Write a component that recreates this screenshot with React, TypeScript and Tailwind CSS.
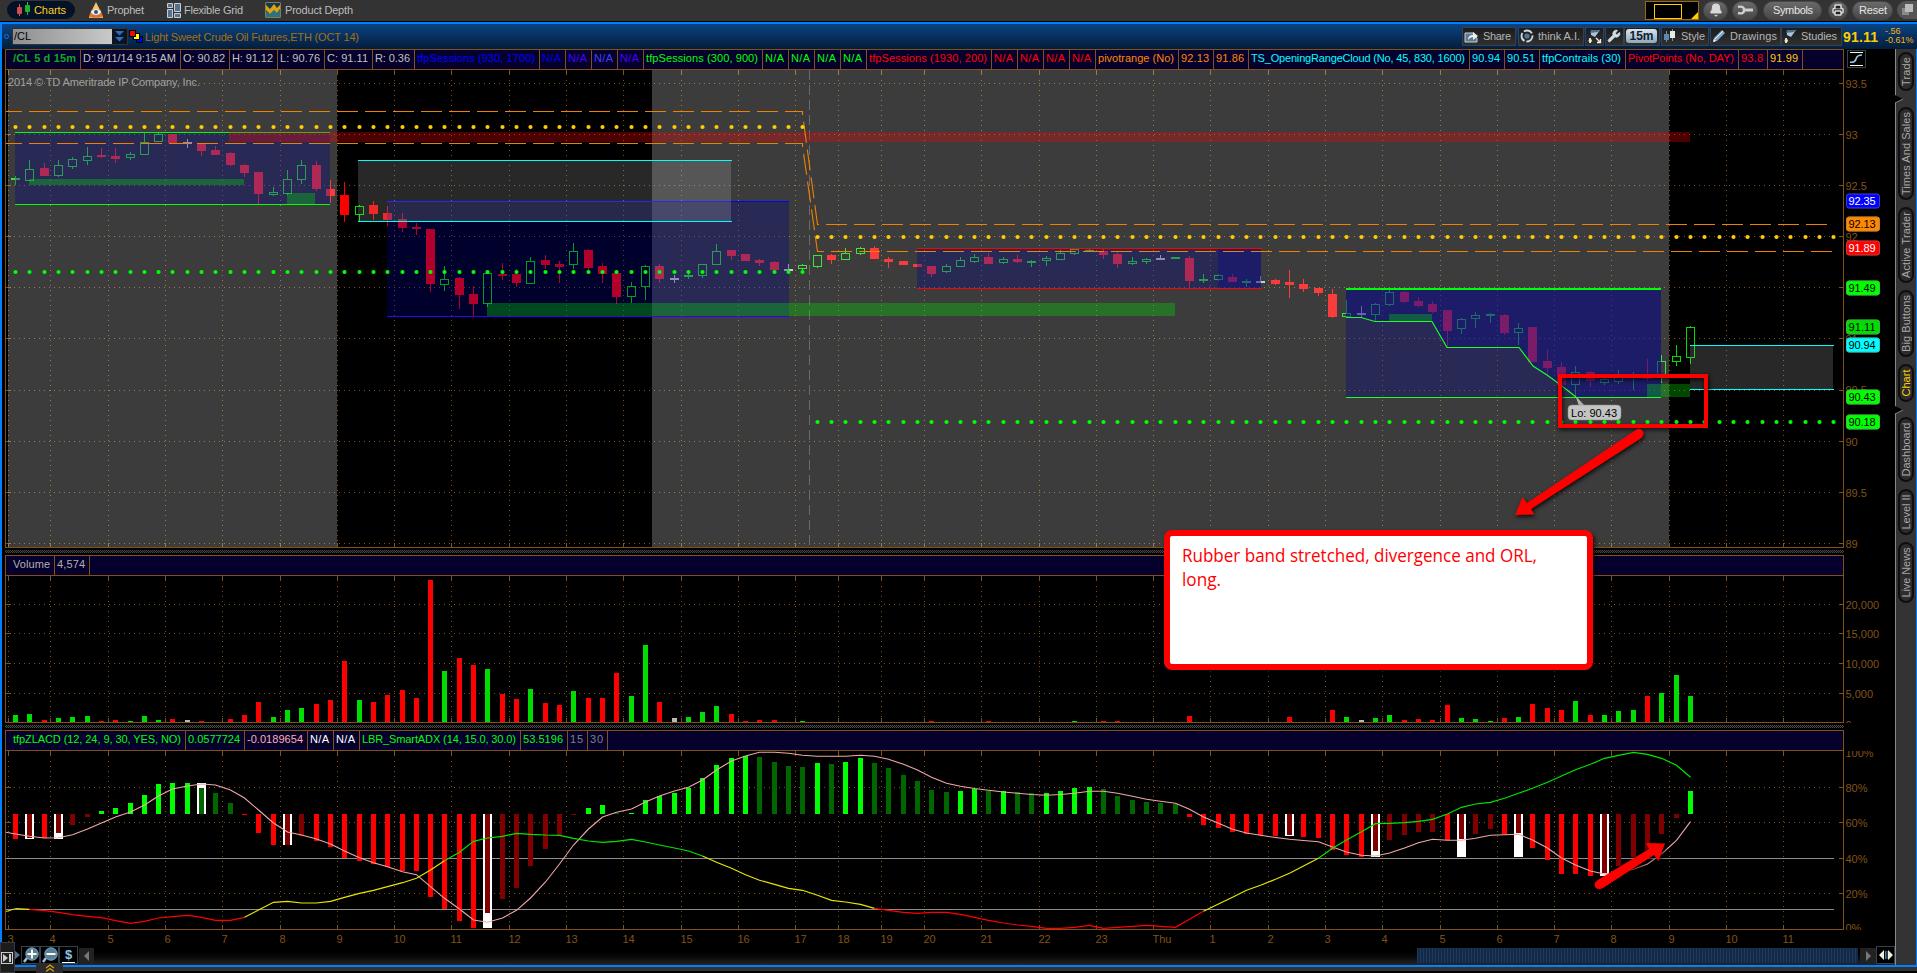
import React from 'react';
import { Bell, Printer, Wrench } from 'lucide-react';

const FIRST_X = 15;
const STEP = 14.316;
const barX = (i: number) => Math.round(FIRST_X + STEP * i);

const BROWN = '#80521a';

// x of each hour line, together with its label
const hours: [number, string][] = [
  [8, '3'], [50, '4'], [108, '5'], [165, '6'], [222, '7'], [280, '8'], [337, '9'], [394, '10'],
  [451, '11'], [509, '12'], [566, '13'], [623, '14'], [681, '15'], [738, '16'], [795, '17'],
  [838, '18'], [881, '19'], [924, '20'], [981, '21'], [1039, '22'], [1096, '23'], [1153, 'Thu'],
  [1210, '1'], [1268, '2'], [1325, '3'], [1382, '4'], [1440, '5'], [1497, '6'], [1554, '7'],
  [1611, '8'], [1669, '9'], [1726, '10'], [1783, '11'],
];

// kind (h hollow, r red, g green, d doji), high, body top, body bottom, low
const candles: [string, number, number, number, number][] = [
  ['g', 176, 178, 180, 185], ['h', 160, 169, 181, 181], ['r', 163, 168, 176, 176], ['h', 160, 165, 176, 177],
  ['h', 157, 159, 167, 169], ['h', 147, 156, 161, 165], ['r', 148, 155, 157, 158], ['r', 148, 156, 159, 163],
  ['h', 152, 154, 158, 160], ['h', 133, 142, 155, 155], ['h', 133, 134, 142, 142], ['r', 134, 134, 143, 143],
  ['d', 139, 142, 144, 148], ['r', 143, 143, 151, 156], ['r', 146, 150, 155, 155], ['r', 152, 153, 165, 166],
  ['r', 164, 165, 173, 177], ['r', 172, 172, 194, 204], ['h', 187, 192, 195, 196], ['h', 170, 179, 194, 195],
  ['h', 160, 165, 180, 184], ['r', 161, 165, 189, 191], ['r', 180, 189, 196, 203], ['r', 182, 195, 215, 222],
  ['h', 205, 206, 215, 222], ['r', 201, 205, 214, 220], ['r', 206, 213, 220, 226], ['r', 213, 219, 228, 232],
  ['r', 223, 227, 229, 235], ['r', 229, 229, 284, 292], ['h', 266, 279, 285, 291], ['r', 277, 278, 295, 309],
  ['r', 286, 294, 304, 316], ['h', 272, 273, 304, 307], ['r', 263, 274, 276, 280], ['r', 269, 274, 283, 287],
  ['h', 257, 261, 284, 284], ['r', 255, 260, 265, 269], ['r', 261, 264, 267, 283], ['h', 243, 251, 265, 269],
  ['r', 249, 250, 268, 270], ['r', 263, 266, 274, 283], ['r', 272, 273, 297, 304], ['h', 282, 286, 297, 303],
  ['h', 265, 266, 287, 300], ['r', 264, 266, 279, 283], ['d', 275, 278, 280, 283], ['g', 274, 275, 277, 279],
  ['h', 264, 264, 276, 278], ['h', 244, 251, 265, 265], ['r', 250, 250, 256, 260], ['r', 254, 254, 261, 261],
  ['r', 259, 260, 263, 266], ['r', 261, 262, 270, 270], ['d', 264, 269, 271, 272], ['h', 264, 265, 269, 270],
  ['h', 255, 255, 267, 268], ['r', 254, 255, 260, 264], ['h', 248, 253, 260, 260], ['h', 247, 248, 254, 255],
  ['r', 246, 248, 259, 259], ['r', 257, 259, 262, 268], ['r', 261, 261, 265, 265], ['r', 264, 264, 267, 267],
  ['r', 266, 266, 274, 277], ['h', 264, 266, 272, 273], ['h', 257, 260, 267, 267], ['h', 254, 257, 262, 263],
  ['r', 253, 257, 264, 264], ['h', 257, 259, 263, 264], ['r', 255, 259, 262, 263], ['g', 260, 261, 263, 267],
  ['h', 256, 258, 261, 266], ['h', 250, 253, 260, 260], ['h', 249, 249, 254, 255], ['g', 249, 250, 252, 252],
  ['r', 249, 251, 255, 259], ['r', 251, 254, 264, 268], ['h', 257, 261, 264, 265], ['h', 258, 259, 262, 264],
  ['d', 255, 258, 260, 260], ['g', 257, 257, 259, 259], ['r', 256, 258, 281, 288], ['g', 274, 279, 281, 283],
  ['h', 274, 275, 280, 281], ['r', 274, 277, 282, 282], ['g', 279, 281, 283, 287], ['d', 276, 281, 283, 283],
  ['r', 279, 280, 284, 285], ['r', 270, 282, 285, 298], ['r', 279, 284, 289, 292], ['r', 288, 288, 293, 296],
  ['r', 289, 294, 317, 318], ['h', 300, 313, 317, 317], ['d', 306, 313, 315, 317], ['h', 303, 304, 315, 321],
  ['h', 290, 292, 305, 306], ['r', 291, 292, 302, 303], ['r', 297, 301, 306, 307], ['r', 301, 304, 312, 313],
  ['r', 310, 310, 331, 347], ['h', 318, 319, 329, 334], ['h', 312, 315, 319, 328], ['g', 313, 314, 316, 323],
  ['r', 314, 315, 333, 335], ['h', 323, 328, 333, 345], ['r', 327, 327, 362, 362], ['r', 350, 361, 368, 374],
  ['r', 362, 367, 385, 385], ['h', 366, 372, 385, 396], ['r', 371, 372, 381, 387], ['h', 378, 379, 383, 385],
  ['h', 370, 377, 382, 384], ['g', 372, 376, 378, 390], ['r', 359, 376, 379, 381], ['h', 355, 361, 375, 383],
  ['h', 345, 356, 362, 366], ['h', 326, 327, 358, 364],
];

const volume =
  'g7 g8 r2 g4 g5 g6 r1 r2 g1 g6 g2 r3 w2 r1 r0 r3 r7 r20 g5 g12 g14 r18 r22 r61 g22 r20 r27 r32 r24 r142 g51 r64 r57 g53 r28 r23 g33 r19 r17 g31 r24 r24 r49 g26 g77 r20 w4 g5 g10 g16 r8 r1 r2 r2 r0 g1 r0 r0 r0 r0 r0 r0 r0 r0 r1 r0 r0 r0 r1 r0 r0 r0 r0 r0 g1 r0 r1 r1 r0 r0 r0 r0 r6 r0 r0 r0 r0 r0 r0 r5 r0 r0 r12 g5 w2 g4 g7 r2 r3 r2 r17 g4 g3 g1 r4 g5 r18 r14 r12 g21 r7 g7 g11 g12 r26 g29 g47 g26'.split(' ');

const volumeFill: Record<string, string> = { g: '#00dd00', r: '#ff0000', w: '#b8b8b8' };

// negative values hang below the zero line
const histogram = [
  -25, -24, -24, -19, -11, -3, 3, 6, 11, 19, 30, 31, 31, 26, 21, 11, -1, -19, -31, -31, -22, -27, -33, -44,
  -47, -50, -53, -57, -57, -83, -95, -107, -114, -99, -85, -74, -52, -35, -21, -1, 6, 9, 1, 1, 14, 18, 21,
  26, 36, 49, 56, 58, 57, 52, 48, 47, 51, 50, 52, 56, 51, 46, 39, 33, 24, 22, 23, 25, 23, 23, 22, 21, 21,
  23, 26, 27, 25, 18, 14, 12, 11, 10, -3, -11, -14, -18, -20, -21, -22, -21, -23, -24, -36, -41, -43, -37,
  -26, -21, -18, -18, -26, -25, -20, -15, -20, -19, -34, -46, -60, -60, -62, -59, -52, -43, -36, -20, -4, 23,
];

const fading = new Set([
  1, 3, 4, 5, 13, 14, 15, 19, 20, 33, 34, 35, 36, 37, 38, 39, 42, 52, 53, 54, 55, 57, 60, 61, 62, 63, 64, 65,
  68, 70, 71, 76, 77, 78, 79, 80, 81, 89, 95, 96, 97, 98, 99, 101, 102, 103, 105, 111, 112, 113, 114, 115, 116,
]);

const highlighted: Record<number, number> = {
  1: -25, 3: -25, 13: 31, 19: -31, 33: -114, 89: -22, 95: -43, 101: -43, 105: -43, 111: -62,
};

const signal = [
  834, 836.3, 838, 837.7, 834.7, 829, 823, 817, 812, 805, 796, 789, 786, 784, 785, 790, 798, 810, 823, 832,
  835, 839, 844, 851, 857.7, 862.7, 866.7, 871.7, 874.7, 886.7, 898.3, 909, 920, 922.3, 918, 910.3, 898, 882,
  864, 845, 829, 817, 812.3, 809, 802, 796, 791, 787.3, 780, 770, 761, 756, 752.3, 752.3, 753.3, 755.3, 756.3,
  756.3, 756.3, 755.3, 756.3, 759.3, 764.3, 770, 777.3, 783.3, 786.3, 788.5, 790.3, 792, 793.3, 794.5, 795.3,
  794.5, 793.3, 791.3, 791.3, 793.3, 796.3, 799.3, 801.3, 803.3, 809.3, 817, 823.3, 829.3, 833, 835.3, 837.5,
  839.3, 840.5, 841.7, 847, 852, 855.3, 856, 853, 848, 842.7, 839.3, 840.3, 840.3, 838.3, 835.3, 834.7, 834.3,
  840, 848, 858, 865, 871, 874, 873, 869.3, 864, 854, 840.3, 821.7,
];

const adx = [
  908.7, 909.3, 910.7, 912.3, 914.7, 916.3, 917.7, 920.7, 923.3, 921.3, 918, 916.7, 915.3, 917.3, 920.3, 920.3,
  917.3, 910, 902.3, 901.3, 903, 903, 901.3, 897.3, 893.3, 890.3, 886.7, 882.7, 878.3, 870, 860.7, 852.3, 841.3,
  838, 836.3, 833.3, 834.3, 835, 835.3, 838.3, 841, 842.3, 841.3, 839.3, 842, 845, 848, 851, 856, 862.3, 868.3,
  874.7, 880.3, 884.3, 888.3, 890.3, 895.3, 900.3, 902, 904.3, 908.3, 910.3, 912.3, 913.3, 912.3, 912.3, 914.3,
  917.3, 920.3, 923, 925, 926.3, 928.3, 928.3, 927.3, 925.3, 928.3, 927.3, 926.3, 925.3, 926.3, 927.3, 919.3,
  911.3, 904, 897.3, 890.3, 885.3, 879.3, 873.3, 866, 858.3, 848.3, 840, 831.7, 823.7, 823.3, 822.7, 821.3,
  819.3, 814, 807.3, 804, 802.3, 798.3, 793.3, 788.3, 782.3, 776, 769.7, 764.3, 758.3, 755.3, 752.3, 754.3,
  758.3, 765.3, 777.3,
];

const adxRuns: [number, number, string][] = [
  [0, 1, '#e6e600'], [1, 16, '#ff0000'], [16, 30, '#e6e600'], [30, 48, '#00e600'], [48, 60, '#e6e600'],
  [60, 83, '#ff0000'], [83, 91, '#e6e600'], [91, 117, '#00e600'],
];

const points = (values: number[], from = 0, to = values.length - 1) =>
  values
    .slice(from, to + 1)
    .map((v, i) => `${barX(from + i) + 0.5},${v}`)
    .join(' ');

type Cell = [string, number, string];

const priceCells: Cell[] = [
  ['D: 9/11/14 9:15 AM', 100, 'text-[#c0c0c0]'], ['O: 90.82', 49, 'text-[#c0c0c0]'],
  ['H: 91.12', 48, 'text-[#c0c0c0]'], ['L: 90.76', 47, 'text-[#c0c0c0]'], ['C: 91.11', 48, 'text-[#c0c0c0]'],
  ['R: 0.36', 42, 'text-[#c0c0c0]'], ['tfpSessions (930, 1700)', 125, 'text-[#0000ff]'],
  ['N/A', 26, 'text-[#0000e0]'], ['N/A', 26, 'text-[#4400ff]'], ['N/A', 26, 'text-[#4040ff]'],
  ['N/A', 26, 'text-[#4400ff]'], ['tfpSessions (300, 900)', 119, 'text-[#00ff00]'],
  ['N/A', 26, 'text-[#00ff00]'], ['N/A', 26, 'text-[#00ff00]'], ['N/A', 26, 'text-[#00ff00]'],
  ['N/A', 26, 'text-[#00ff00]'], ['tfpSessions (1930, 200)', 125, 'text-[#ff0000]'],
  ['N/A', 26, 'text-[#ff0000]'], ['N/A', 26, 'text-[#ff0000]'], ['N/A', 26, 'text-[#ff0000]'],
  ['N/A', 26, 'text-[#ff0000]'], ['pivotrange (No)', 83, 'text-[#ff8800]'], ['92.13', 35, 'text-[#ff8800]'],
  ['91.86', 35, 'text-[#ff8800]'], ['TS_OpeningRangeCloud (No, 45, 830, 1600)', 221, 'text-[#00ffff]'],
  ['90.94', 35, 'text-[#00ffff]'], ['90.51', 35, 'text-[#00ffff]'], ['tfpContrails (30)', 86, 'text-[#00ffff]'],
  ['PivotPoints (No, DAY)', 113, 'text-[#ff0000]'], ['93.8', 29, 'text-[#ff0000]'], ['91.99', 35, 'text-[#ffcc00]'],
];

const volumeCells: Cell[] = [['4,574', 35, 'text-[#b0b0b0]']];

const studyCells: Cell[] = [
  ['0.0577724', 59, 'text-[#00ff00]'], ['-0.0189654', 63, 'text-[#ffafaf]'], ['N/A', 26, 'text-white'],
  ['N/A', 26, 'text-white'], ['LBR_SmartADX (14, 15.0, 30.0)', 161, 'text-[#00ff00]'],
  ['53.5196', 47, 'text-[#00ff00]'], ['15', 20, 'text-[#808080]'], ['30', 20, 'text-[#808080]'],
];

function Fit({ text, width, className = '' }: { text: string; width: number; className?: string }) {
  return (
    <svg width={width} height="14" className={`shrink-0 overflow-visible fill-current ${className}`}>
      <text x="0" y="11" textLength={width} lengthAdjust="spacing">
        {text}
      </text>
    </svg>
  );
}

function CellRow({ first, firstWidth, firstClass, cells }: {
  first: string;
  firstWidth: number;
  firstClass: string;
  cells: Cell[];
}) {
  return (
    <div className="flex h-[21px] w-[1839px] shrink-0 border border-[#80521a] bg-[#05002c] text-[11px]">
      <div
        className={`flex shrink-0 items-center border-r border-[#80521a] pb-[3px] pl-[7px] ${firstClass}`}
        style={{ width: firstWidth }}
      >
        <Fit text={first} width={firstWidth - 12} />
      </div>
      {cells.map(([text, width, color], i) => (
        <div
          key={i}
          className={`flex shrink-0 items-center border-r border-[#80521a] pb-[3px] pl-[2px] ${color}`}
          style={{ width }}
        >
          <Fit text={text} width={width - 7} />
        </div>
      ))}
    </div>
  );
}

function Grid({ top, bottom, rows }: { top: number; bottom: number; rows: number[] }) {
  return (
    <g stroke={BROWN} shapeRendering="crispEdges">
      {hours.map(([x]) => (
        <g key={x}>
          <path d={`M${x + 0.5} ${top + 10}V${bottom - 5}`} strokeDasharray="1 4" />
          <path d={`M${x + 0.5} ${top}v5M${x + 0.5} ${bottom - 4}v4`} />
        </g>
      ))}
      {rows.map((y) => (
        <g key={y}>
          <path d={`M14 ${y + 0.5}H1830`} strokeDasharray="1 4" />
          <path d={`M6 ${y + 0.5}h5M1839 ${y + 0.5}h4`} />
        </g>
      ))}
      <path d={`M5.5 ${top}V${bottom + 0.5}H1843.5V${top}`} fill="none" />
    </g>
  );
}

function AxisLabels({ labels }: { labels: [number, string][] }) {
  return (
    <g fill={BROWN} fontSize="11">
      {labels.map(([y, label]) => (
        <text key={label} x="1845.5" y={y + 4}>
          {label}
        </text>
      ))}
    </g>
  );
}

function Candle({ i }: { i: number }) {
  const [kind, high, top, bottom, low] = candles[i];
  const x = barX(i);
  const color = kind === 'r' ? '#ff0000' : kind === 'd' ? '#c0c0c0' : '#00dd00';
  if (kind === 'h') {
    return (
      <g stroke={color} fill="none">
        <path d={`M${x + 0.5} ${high}V${top}M${x + 0.5} ${bottom}V${low}`} />
        <rect x={x - 3.5} y={top + 0.5} width="8" height={Math.max(2, bottom - top - 1)} />
      </g>
    );
  }
  return (
    <g fill={color}>
      <rect x={x} y={high} width="1" height={low - high} />
      <rect x={x - 4} y={top} width="9" height={bottom - top} />
    </g>
  );
}

function Dots({ from, to, y, color }: { from: number; to: number; y: number; color: string }) {
  return (
    <g fill={color}>
      {Array.from({ length: to - from + 1 }, (_, k) => (
        <circle key={k} cx={barX(from + k) + 0.5} cy={y} r="2.1" />
      ))}
    </g>
  );
}

const BLUE = 'rgba(0,0,150,0.3)';
const GREEN = 'rgba(0,240,0,0.3)';

const tags: [number, string, string, string][] = [
  [201, '92.35', '#0000ff', '#ffffff'],
  [224, '92.13', '#ff8800', '#000000'],
  [248, '91.89', '#ff0000', '#ffffff'],
  [288, '91.49', '#00ff00', '#000000'],
  [327, '91.11', '#00dd00', '#000000'],
  [345, '90.94', '#00ffff', '#000000'],
  [397, '90.43', '#00ff00', '#000000'],
  [422, '90.18', '#00ff00', '#000000'],
];

function PriceChart() {
  return (
    <svg className="block shrink-0" width="1890" height="478" viewBox="5 70 1890 478">
      <Grid top={70} bottom={547} rows={[83, 134, 185, 236, 287, 338, 390, 441, 492, 543]} />
      <g shapeRendering="crispEdges">
        {candles.map((_, i) => (
          <Candle key={i} i={i} />
        ))}
        <rect x="8" y="70" width="329" height="477" fill="rgba(240,240,240,0.25)" />
        <rect x="652" y="70" width="1017" height="477" fill="rgba(240,240,240,0.25)" />
        <path d="M809.5 70V547" stroke="#6a6a6a" strokeDasharray="10 5" />

        <rect x="15" y="132" width="315" height="73" fill={BLUE} />
        <path d="M15 132.5H330M15 204.5H330" stroke="#00ff00" />
        <rect x="29" y="179" width="215" height="6" fill={GREEN} />
        <rect x="287" y="193" width="28" height="11" fill={GREEN} />

        <rect x="387" y="201" width="402" height="116" fill={BLUE} />
        <path d="M387 201.5H789" stroke="#0000ff" />
        <path d="M387 316.5H789" stroke="#3300ff" />
        <rect x="487" y="303" width="688" height="13" fill={GREEN} />
        <rect x="358" y="160" width="373" height="61" fill="rgba(180,180,180,0.22)" />
        <path d="M358 160.5H732M358 221.5H732" stroke="#00ffff" />

        <rect x="917" y="248" width="344" height="40" fill={BLUE} />
        <rect x="1218" y="248" width="43" height="40" fill={BLUE} />
        <path d="M917 248.5H1262M917 288.5H1262" stroke="#ff0000" />

        <rect x="1346" y="289" width="315" height="108" fill={BLUE} />
        <polygon
          points="1346,289 1661,289 1661,397 1576,397 1560,384 1547,375 1533,367 1519,348 1447,348 1432,321 1375,321 1361,318 1346,318"
          fill={BLUE}
        />
        <rect x="1389" y="314" width="43" height="7" fill={GREEN} />
        <rect x="1647" y="384" width="43" height="13" fill={GREEN} />
        <path d="M1346 289H1661" stroke="#00ff00" strokeWidth="2" />
        <path d="M1346 397.5H1661" stroke="#1fff1f" />

        <rect x="229" y="132" width="1461" height="10" fill="rgba(255,0,0,0.3)" />
        <rect x="1690" y="345" width="143" height="45" fill="rgba(180,180,180,0.22)" />
        <path d="M1690 345.5H1834M1690 389.5H1834" stroke="#00ffff" />
      </g>
      <polyline
        points="1346,317.5 1361,317.5 1375,321.5 1432,321.5 1447,347.5 1519,347.5 1533,366 1547,375 1560,384.5 1576,397"
        fill="none"
        stroke="#1fff1f"
        strokeWidth="1.2"
      />
      <g fill="none" stroke="#f08000" strokeWidth="1.1">
        <path d="M6 111.5H802.5V114L817.5 224.5H1833" strokeDasharray="21 7" strokeDashoffset="5" />
        <path d="M6 143.5H802.5V146L817.5 251.5H1833" strokeDasharray="21 7" strokeDashoffset="5" />
      </g>
      <Dots from={0} to={55} y={127} color="#ffcc00" />
      <Dots from={56} to={127} y={237} color="#ffcc00" />
      <Dots from={0} to={55} y={272} color="#00ff00" />
      <Dots from={56} to={127} y={422} color="#00ff00" />
      <text x="8" y="86" fill="#a0a0a0" fontSize="11" textLength="192">
        2014 © TD Ameritrade IP Company, Inc.
      </text>
      <AxisLabels
        labels={[
          [84, '93.5'], [135, '93'], [186, '92.5'], [237, '92'], [339, '91'], [390, '90.5'], [442, '90'],
          [493, '89.5'], [544, '89'],
        ]}
      />
      {tags.map(([y, label, fill, color]) => (
        <g key={label}>
          <rect x="1846.5" y={y - 7} width="33" height="14" rx="2.5" fill={fill} stroke={fill} />
          <rect x="1846.5" y={y - 7} width="33" height="14" rx="2.5" fill="none" stroke="rgba(128,128,128,0.5)" />
          <text x="1848.5" y={y + 4} fontSize="11" fill={color} textLength="27">
            {label}
          </text>
        </g>
      ))}
      <path d="M1575.5 396L1579 406H1585Z" fill="#b4b4b4" />
      <rect x="1568" y="405" width="53" height="15" rx="4" fill="#c4c4c4" stroke="#8a8a8a" strokeWidth="0.5" />
      <text x="1571" y="417" fontSize="11" textLength="46">
        Lo: 90.43
      </text>
    </svg>
  );
}

function VolumeChart() {
  return (
    <svg className="block shrink-0" width="1890" height="147" viewBox="5 576 1890 147">
      <Grid top={576} bottom={722} rows={[604, 633, 663, 693]} />
      <g shapeRendering="crispEdges">
        {volume.map((v, i) => {
          const h = Number(v.slice(1));
          return <rect key={i} x={barX(i) - 2} y={722 - h} width="5" height={h} fill={volumeFill[v[0]]} />;
        })}
      </g>
      <AxisLabels labels={[[605, '20,000'], [634, '15,000'], [664, '10,000'], [694, '5,000'], [725, '0']]} />
    </svg>
  );
}

function StudyChart() {
  return (
    <svg className="block shrink-0" width="1890" height="179" viewBox="5 751 1890 179">
      <Grid top={751} bottom={929} rows={[787, 822, 858, 893]} />
      <path d="M6 858.5H1834M6 909.5H1834" stroke="#8c8c8c" />
      <g shapeRendering="crispEdges">
        {histogram.map((v, i) => {
          const white = highlighted[i];
          const bright = v > 0 ? '#00ff00' : '#ff0000';
          const dark = v > 0 ? '#006600' : '#800000';
          return (
            <g key={i}>
              {white !== undefined && (
                <rect x={barX(i) - 4} y={white > 0 ? 814 - white : 814} width="9" height={Math.abs(white)} fill="#fff" />
              )}
              <rect
                x={barX(i) - 2}
                y={v > 0 ? 814 - v : 814}
                width="5"
                height={Math.abs(v)}
                fill={fading.has(i) ? dark : bright}
              />
            </g>
          );
        })}
      </g>
      <polyline points={`6,832.3 ${points(signal)}`} fill="none" stroke="#f0a8a8" strokeWidth="1.1" />
      <path d="M6 911.5L15.5 908.7" stroke="#e6e600" />
      {adxRuns.map(([from, to, color]) => (
        <polyline key={from} points={points(adx, from, to)} fill="none" stroke={color} strokeWidth="1.2" />
      ))}
      <AxisLabels
        labels={[[753, '100%'], [788, '80%'], [823, '60%'], [859, '40%'], [894, '20%'], [928, '0%']]}
      />
    </svg>
  );
}

function Splitter() {
  return (
    <div className="flex h-[7px] w-[1839px] shrink-0 items-center">
      <div className="h-[3px] w-full bg-[repeating-conic-gradient(#4a4a4a_0_25%,#0a0a0a_0_50%)] bg-[length:2px_2px]" />
    </div>
  );
}

function TopBar() {
  return (
    <div className="flex h-[22px] shrink-0 items-center border-b border-black bg-[#333] pb-px text-[11px] text-[#bdbdbd]">
      <div className="ml-[7px] flex h-[18px] w-[68px] items-center rounded-full bg-[#031226] pl-[9px] text-[#ffcc22]">
        <svg width="16" height="16" viewBox="0 0 16 16" className="mr-[2px]">
          <path d="M3.500 2v12" stroke="#c55" />
          <path d="M11.500 0v13" stroke="#2b4" />
          <rect x="1" y="5" width="5" height="7" rx="1" fill="#d34b4b" />
          <rect x="9" y="3" width="5" height="7" rx="1" fill="#1fb32d" />
        </svg>
        <Fit text="Charts" width={32} />
      </div>
      <svg width="16" height="17" viewBox="0 0 16 17" className="ml-[13px]">
        <path d="M8 0L12 8H4Z" fill="#f3c56a" />
        <path d="M4 7h8l3 7q-7 4-14 0Z" fill="#d8742a" />
        <ellipse cx="8" cy="10" rx="5" ry="3" fill="#e8eef5" />
        <circle cx="8" cy="10" r="2" fill="#28508a" />
        <path d="M1 14q7 3 14 0v2H1Z" fill="#f0a95a" />
      </svg>
      <div className="ml-[3px] w-[60px]">
        <Fit text="Prophet" width={37} />
      </div>
      <svg width="14" height="15" viewBox="0 0 14 15" fill="#55718c" stroke="#c5ced8">
        <path d="M.5.5h5v4h-5zM.5 6.500h5v8h-5zM7.500.5h6v8h-6zM7.500 10.500h6v4h-6z" />
      </svg>
      <div className="ml-[3px] w-[81px]">
        <Fit text="Flexible Grid" width={59} />
      </div>
      <svg width="16" height="16" viewBox="0 0 16 16">
        <rect width="16" height="16" rx="1.500" fill="#8a7c50" />
        <rect x="1" y="1" width="14" height="14" fill="#143a4c" />
        <path d="M1 15V9l4 3 4-4 3 3 3-3v7Z" fill="#2b7184" />
        <path d="M1 3l4 4 4-5 3 4 3-3v4l-3 4-3-3-4 4-4-4Z" fill="#d9a514" />
      </svg>
      <div className="ml-[4px] w-[70px]">
        <Fit text="Product Depth" width={68} />
      </div>
      <div className="flex-1" />
      <div className="flex items-center text-[#e6e6e6]">
        <svg width="54" height="19" viewBox="0 0 54 19">
          <rect x=".5" y=".5" width="53" height="18" stroke="#9a6a10" fill="#000" />
          <rect x="9.500" y="3.500" width="27" height="14" stroke="#ffcc00" fill="none" />
          <path d="M53 11v7h-7Z" fill="#ffcc00" />
        </svg>
        <RoundButton width={25} margin={4}>
          <Bell size={14} fill="#d8d8d8" color="#d8d8d8" strokeWidth={2} />
        </RoundButton>
        <RoundButton width={26} margin={4}>
          <svg width="17" height="10" viewBox="0 0 17 10" fill="none" stroke="#cfcfcf" strokeWidth="2.500">
            <path d="M1 2q6-1.500 6 3t-6 3" />
            <path d="M7 5h9" strokeWidth="3" />
          </svg>
        </RoundButton>
        <RoundButton width={59} margin={5}>
          <Fit text="Symbols" width={40} />
        </RoundButton>
        <RoundButton width={20} margin={6}>
          <Printer size={12} color="#dcdcdc" fill="#222" strokeWidth={3} />
        </RoundButton>
        <RoundButton width={41} margin={4}>
          <Fit text="Reset" width={28} />
        </RoundButton>
        <div className="ml-1 flex h-[18px] w-[20px] items-center rounded-l-full bg-[#555] pl-[5px]">
          <svg width="11" height="12" viewBox="0 0 11 12">
            <path d="M0 4h7v7H0z" fill="#8a8a8a" />
            <path d="M3 0h8v8H3z" fill="#bbb" />
          </svg>
        </div>
      </div>
    </div>
  );
}

function RoundButton({ width, margin, children }: { width: number; margin: number; children: React.ReactNode }) {
  return (
    <div
      className="flex h-[19px] shrink-0 items-center justify-center rounded-full border border-[#484848] bg-gradient-to-b from-[#6a6a6a] to-[#474747]"
      style={{ width, marginLeft: margin }}
    >
      {children}
    </div>
  );
}

function ToolButton({ width, margin = 1, children }: { width: number; margin?: number; children: React.ReactNode }) {
  return (
    <div
      className="flex h-[19px] shrink-0 items-center gap-[4px] border border-[#34414e] bg-gradient-to-b from-[#1c1c1c] to-[#303030] pl-px"
      style={{ width, marginLeft: margin }}
    >
      {children}
    </div>
  );
}

function Flashlight() {
  return (
    <svg width="14" height="15" viewBox="0 0 14 15">
      <path d="M4 1h9L8 8 4 6Z" fill="#a9c6de" />
      <path d="M4 1h9l-2 2-8 1Z" fill="#4d7090" />
      <path d="M3 9q3 3 0 5-2-2 0-5" fill="#e4f2d8" stroke="#e4f2d8" />
    </svg>
  );
}

function Toolbar() {
  return (
    <div className="flex h-[25px] shrink-0 items-center bg-gradient-to-b from-[#0a4484] to-[#041d3c] pb-px text-[11px] text-[#b4b4b4]">
      <div className="ml-[2px] h-[5px] w-[5px] rounded-full border border-[#1e6fd0]" />
      <div className="ml-[3px] flex h-[17px] w-[116px] items-center border border-[#333] bg-gradient-to-r from-[#8f8f8f] to-[#d2d2d2] text-black">
        <div className="flex-1 pl-px">
          <Fit text="/CL" width={17} />
        </div>
        <svg width="15" height="15" viewBox="0 0 15 15">
          <rect width="15" height="15" fill="#0b1420" />
          <path d="M3 2h9L7.500 6.500ZM3 8h9l-4.500 4.500Z" fill="#2a6cc0" />
        </svg>
      </div>
      <svg width="14" height="13" viewBox="0 0 14 13" stroke="#000" className="ml-[1px]">
        <rect x="7.500" y="6.500" width="6" height="6" fill="#0000ff" />
        <rect x="4.500" y="3.500" width="6" height="6" fill="#ffff00" />
        <rect x=".5" y=".5" width="6" height="6" fill="#ff0000" />
      </svg>
      <div className="ml-[2px] pt-px text-[#a87010]">
        <Fit text="Light Sweet Crude Oil Futures,ETH (OCT 14)" width={214} />
      </div>
      <div className="flex-1" />
      <ToolButton width={54}>
        <svg width="15" height="13" viewBox="0 0 15 13">
          <path d="M1 3h9v2l3 3v4H1Z" fill="#5d7890" stroke="#c0d4e4" />
          <path d="M4 10q0-5 5-5V2l5 4-5 4V7q-3 0-5 3" fill="#f0f0e4" />
        </svg>
        <Fit text="Share" width={28} />
      </ToolButton>
      <ToolButton width={66} margin={2}>
        <svg width="14" height="14" viewBox="0 0 14 14" fill="none">
          <circle cx="7" cy="7" r="5.500" stroke="#c9dcea" strokeWidth="1.800" strokeDasharray="9 2" />
          <circle cx="7" cy="7" r="2.600" fill="#4f7897" />
        </svg>
        <Fit text="think A.I." width={42} />
      </ToolButton>
      <ToolButton width={19}>
        <svg width="16" height="15" viewBox="0 0 16 15">
          <path d="M4 1h9L8 8 4 6Z" fill="#a9c6de" />
          <path d="M4 1h9l-2 2-8 1Z" fill="#4d7090" />
          <path d="M3 9q3 3 0 5-2-2 0-5" fill="#e4f2d8" stroke="#e4f2d8" />
          <path d="M9 9l4 4M13.500 10v3.500H10" stroke="#f0f0e4" strokeWidth="1.300" fill="none" />
        </svg>
      </ToolButton>
      <ToolButton width={19}>
        <Wrench size={14} color="#cfe0e8" fill="#cfe0e8" strokeWidth={1.5} />
      </ToolButton>
      <ToolButton width={36} margin={0}>
        <div className="flex h-[14px] w-[31px] items-center justify-center rounded-[3px] bg-gradient-to-b from-[#d8e6f0] to-[#8da7bd] text-[12px] font-bold text-[#10202c]">
          15m
        </div>
      </ToolButton>
      <ToolButton width={48}>
        <svg width="14" height="14" viewBox="0 0 14 14">
          <path d="M3.500 2v11M9.500 0v12" stroke="#6a94b4" />
          <rect x="1" y="5" width="5" height="6" fill="#5f88ac" />
          <rect x="7" y="2" width="5" height="7" fill="#e2efe0" />
        </svg>
        <Fit text="Style" width={24} />
      </ToolButton>
      <ToolButton width={71}>
        <svg width="14" height="14" viewBox="0 0 14 14">
          <path d="M1 13l1-4 8-8 3 3-8 8Z" fill="#7fabd0" />
          <path d="M3 10l8-8" stroke="#e4f0f8" />
          <path d="M1 13l1-3 2 2Z" fill="#fff" />
        </svg>
        <Fit text="Drawings" width={47} />
      </ToolButton>
      <ToolButton width={61} margin={0}>
        <Flashlight />
        <Fit text="Studies" width={36} />
      </ToolButton>
      <div className="ml-px w-[42px] text-[14px] font-bold text-[#ffcc00]">
        <svg width="35" height="16" className="overflow-visible fill-current">
          <text x="0" y="14" textLength="35">
            91.11
          </text>
        </svg>
      </div>
      <div className="w-[32px] text-[9px] leading-[9px] text-[#ffb000]">
        <div>-.56</div>
        <div>-0.61%</div>
      </div>
    </div>
  );
}

const sideTabs: [string, number, number, number][] = [
  ['Trade', 39, 3, 29], ['Times And Sales', 93, 16, 83], ['Active Trader', 76, 7, 66], ['Big Buttons', 67, 7, 57],
  ['Chart', 38, 7, 27], ['Dashboard', 65, 15, 54], ['Level II', 46, 7, 35], ['Live News', 61, 7, 50],
];

function SideTabs() {
  return (
    <div className="relative flex w-[21px] shrink-0 flex-col items-center border-l border-[#8a8a8a] bg-[#333] text-[11px]">
      {sideTabs.map(([label, height, gap, length]) => (
        <div
          key={label}
          className={`w-[16px] shrink-0 rounded-full border-2 border-[#0e0e0e] bg-[#2c2c2c] ${
            label === 'Chart' ? 'text-[#ffcc00]' : 'text-[#a8a8a8]'
          }`}
          style={{ height, marginTop: gap }}
        >
          <svg width="12" height={height - 4} className="block fill-current">
            <text transform={`translate(10 ${(height - 4 + length) / 2}) rotate(-90)`} textLength={length}>
              {label}
            </text>
          </svg>
        </div>
      ))}
      {/* notches that close the groups of tabs */}
      <svg width="9" height="8" className="absolute top-[46px] -left-[1px]">
        <path d="M0 0L8 4L0 8Z" />
        <path d="M8 4L0 8" stroke="#888" />
      </svg>
      <svg width="9" height="8" className="absolute top-[357px] -left-[1px]">
        <path d="M0 0L8 4L0 8Z" />
        <path d="M8 4L0 8" stroke="#888" />
      </svg>
    </div>
  );
}

function Magnifier({ plus = false }: { plus?: boolean }) {
  return (
    <div className="flex h-[18px] w-[19px] items-center justify-center border border-[#34414e] bg-black">
      <svg width="16" height="16" viewBox="0 0 16 16">
        <path d="M1 15l3-4" stroke="#9cc0d8" strokeWidth="2.500" />
        <circle cx="9" cy="7" r="6.200" fill="#567d9e" stroke="#88a9c2" />
        <path d={plus ? 'M4.500 7h9M9 2.500v9' : 'M4.500 7h9'} stroke="#fffde0" strokeWidth="2" />
      </svg>
    </div>
  );
}

function ScrollBar() {
  return (
    <div className="flex h-[17px] w-[1890px] shrink-0 items-start bg-gradient-to-b from-black to-[#262626]">
      <div className="-mt-[2px] ml-[9px] flex h-[18px] w-[7px] items-center bg-black">
        <svg width="7" height="10" viewBox="0 0 7 10">
          <path d="M0 0l6 5-6 5Z" fill="#50728e" />
        </svg>
      </div>
      <div className="-mt-[2px] flex">
        <Magnifier plus />
        <Magnifier />
        <div className="flex h-[18px] w-[19px] items-center justify-center border border-[#34414e] bg-black">
          <div className="border-b border-white px-[3px] text-[13px] leading-[14px] font-bold text-[#8fc4e8]">$</div>
        </div>
      </div>
      <div className="ml-px flex h-[16px] w-[15px] items-center justify-center bg-[#222]">
        <svg width="5" height="10">
          <path d="M5 0v10L0 5Z" fill="#777" />
        </svg>
      </div>
      <div className="flex-1" />
      <div className="h-[15px] w-[441px] bg-[repeating-linear-gradient(90deg,#1d3a5c_0_1px,#122a47_1px_3px)]" />
      <div className="ml-[2px] flex h-[15px] w-[16px] items-center justify-center bg-[#222]">
        <svg width="5" height="10">
          <path d="M0 0v10l5-5Z" fill="#777" />
        </svg>
      </div>
      <div className="-mt-[2px] flex h-[18px] w-[19px] items-center justify-center border border-[#34414e] bg-black">
        <svg width="14" height="12" viewBox="0 0 14 12">
          <path d="M5 1v10L0 6ZM9 1v10l5-5Z" fill="#eef4dc" />
          <path d="M6.500 2v8M8 2v8" stroke="#4d7aa0" />
        </svg>
      </div>
    </div>
  );
}

function HourLabels() {
  return (
    <svg className="block shrink-0" width="1890" height="18" viewBox="5 930 1890 18">
      <g fill={BROWN} fontSize="11">
        {hours.map(([x, label]) => (
          <text key={x} x={x - 0.5} y="943">
            {label}
          </text>
        ))}
      </g>
    </svg>
  );
}

// Hand-drawn trade notes, on top of the whole chart
function Annotations() {
  return (
    <>
      <svg className="absolute inset-0 drop-shadow-[1px_2px_2px_rgba(0,0,0,0.8)]" width="1917" height="973">
        <rect x="1560" y="376" width="146" height="50" fill="none" stroke="#ff0000" strokeWidth="4" />
        <path
          fill="#ff0000"
          d="M1515 515L1522.500 497L1527 503L1635 430.500Q1641 427 1643.500 432Q1644 436 1640 439L1531 509L1534.500 514.500Z"
        />
        <path
          fill="#ff0000"
          d="M1665 843.500L1646 843L1649 849L1597 880.500Q1593 884 1596 888Q1599 890 1603 888L1654 855L1658.500 861Z"
        />
      </svg>
      <div className="absolute top-[530px] left-[1164px] h-[140px] w-[429px] rounded-[8px] border-[6px] border-[#ff0000] bg-white pt-[6px] pl-[12px] font-['Open_Sans','Noto_Sans',sans-serif] shadow-[2px_3px_4px_rgba(0,0,0,0.7)]">
        <svg width="380" height="60" fill="#ff0000" fontSize="18">
          <text x="0" y="20" textLength="355" lengthAdjust="spacingAndGlyphs">
            Rubber band stretched, divergence and ORL,
          </text>
          <text x="0" y="44" textLength="39" lengthAdjust="spacingAndGlyphs">
            long.
          </text>
        </svg>
      </div>
    </>
  );
}

export default function App() {
  return (
    <div className="relative flex h-[973px] w-[1917px] flex-col overflow-hidden bg-black font-['Liberation_Sans',Arial,sans-serif]">
      <TopBar />
      <div className="flex h-[945px] shrink-0 flex-col border-t-2 border-b-2 border-l-2 border-[#0080ff]">
        <Toolbar />
        <div className="flex h-[916px]">
          <div className="ml-[3px] flex w-[1890px] shrink-0 flex-col">
            <CellRow
              first="/CL 5 d 15m"
              firstWidth={75}
              firstClass="font-bold text-[#10a828]"
              cells={priceCells}
            />
            <PriceChart />
            <Splitter />
            <CellRow first="Volume" firstWidth={49} firstClass="text-[#b0b0b0]" cells={volumeCells} />
            <VolumeChart />
            <Splitter />
            <CellRow
              first="tfpZLACD (12, 24, 9, 30, YES, NO)"
              firstWidth={180}
              firstClass="text-[#00ff00]"
              cells={studyCells}
            />
            <StudyChart />
            <HourLabels />
            <ScrollBar />
          </div>
          <SideTabs />
          <div className="w-px bg-[#0080ff]" />
        </div>
      </div>
      <div className="h-[4px] bg-[#333]" />

      {/* curve button beside the price header */}
      <svg className="absolute top-[50px] left-[1847px]" width="19" height="18" viewBox="0 0 19 18">
        <rect x=".5" y=".5" width="18" height="17" fill="#000" stroke="#34414e" />
        <path d="M3 2.500h13M3 15.500h13" stroke="#fffde0" />
        <path d="M3 12q5 1 6-3t6-4" stroke="#9cc8ea" strokeWidth="1.600" fill="none" />
      </svg>

      {/* collapsed side and bottom drawers */}
      <div className="absolute top-[942px] left-0 flex h-[31px] w-[15px] items-center border border-[#383838] bg-[#1c1c1c]">
        <svg width="12" height="12" viewBox="0 0 12 12">
          <rect x=".5" y=".5" width="11" height="11" fill="#222" stroke="#ccc" />
          <path d="M2 2v8l5-4Z" fill="#ccc" />
          <path d="M9 2v8" stroke="#ccc" strokeWidth="2" />
        </svg>
      </div>
      <div className="absolute top-[963px] left-[36px] flex h-[10px] w-[27px] items-center justify-center rounded-t bg-[#2b2b2b]">
        <svg width="8" height="8" viewBox="0 0 8 8" fill="none" stroke="#d9a514" strokeWidth="1.200">
          <path d="M0 4l4-3 4 3M0 7.500l4-3 4 3" />
        </svg>
      </div>

      <Annotations />
    </div>
  );
}
